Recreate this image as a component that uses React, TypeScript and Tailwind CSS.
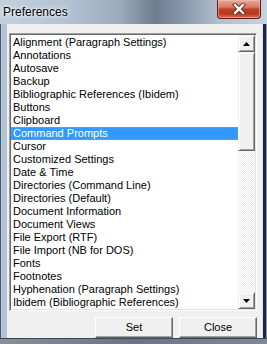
import React from "react";

const items = [
  "Alignment (Paragraph Settings)",
  "Annotations",
  "Autosave",
  "Backup",
  "Bibliographic References (Ibidem)",
  "Buttons",
  "Clipboard",
  "Command Prompts",
  "Cursor",
  "Customized Settings",
  "Date & Time",
  "Directories (Command Line)",
  "Directories (Default)",
  "Document Information",
  "Document Views",
  "File Export (RTF)",
  "File Import (NB for DOS)",
  "Fonts",
  "Footnotes",
  "Hyphenation (Paragraph Settings)",
  "Ibidem (Bibliographic References)",
];

const raised =
  "border border-t-[#f0f0f0] border-l-[#f0f0f0] border-r-[#696969] border-b-[#696969] shadow-[inset_1px_1px_#ffffff,inset_-1px_-1px_#a0a0a0] bg-[#f0f0f0]";

export default function App() {
  return (
    <div className="w-[267px] h-[344px] flex flex-col overflow-hidden bg-[linear-gradient(90deg,#b3c3d6_0%,#aebfd2_40%,#8e9db0_60%,#a9b9cb_80%,#b8c7d8_100%)] font-['Liberation_Sans',Arial,sans-serif]">
      {/* Title bar */}
      <div className="h-[24px] flex items-start shrink-0 bg-[linear-gradient(90deg,#c2d0de_0%,#b4c3d4_25%,#9aa9bc_45%,#6f7d91_58%,#8696aa_68%,#b0bfcf_82%,#c6d2df_100%)]">
        <div className="pl-[3px] pt-[4px] text-[12px] leading-[16px] text-black [text-shadow:0_0_5px_#ffffff,0_0_3px_#ffffff]">
          Preferences
        </div>
        <div className="ml-auto mr-[6px] w-[44px] h-[19px] rounded-b-[4px] border border-t-0 border-[#5a1e14] bg-[linear-gradient(180deg,#e8a797_0%,#d57a66_40%,#c0412a_50%,#b9371f_75%,#db6a4c_100%)] shadow-[inset_0_0_0_1px_rgba(255,200,190,0.5)] flex items-center justify-center">
          <svg width="14" height="12" viewBox="0 0 14 12">
            <path d="M3 2 L11 10 M11 2 L3 10" stroke="#5a2a22" strokeWidth="4.2" strokeLinecap="square" />
            <path d="M3 2 L11 10 M11 2 L3 10" stroke="#ffffff" strokeWidth="2.4" strokeLinecap="square" />
          </svg>
        </div>
      </div>

      {/* Body */}
      <div className="flex flex-1 min-h-0">
        <div className="w-[7px] shrink-0 border-l border-[#4e5b6c]" />
        <div className="flex-1 bg-[#f0f0f0] flex flex-col pl-[2px] pr-[5px] pt-[9px] text-[11px] leading-[13px] text-black">
          {/* Listbox */}
          <div className="h-[278px] flex border border-t-[#a0a0a0] border-l-[#a0a0a0] border-r-white border-b-white shadow-[inset_1px_1px_#696969,inset_-1px_-1px_#e3e3e3] p-[1px] bg-white">
            <div className="flex-1 flex flex-col pt-px">
              {items.map((it) => {
                const sel = it === "Command Prompts";
                return (
                  <div
                    key={it}
                    className={
                      sel
                        ? "h-[13px] pl-[1px] bg-[#3399ff] text-white border border-dotted border-[#e08a40] leading-[11px] whitespace-nowrap"
                        : "h-[13px] pl-[2px] whitespace-nowrap"
                    }
                  >
                    {it}
                  </div>
                );
              })}
            </div>
            <div className="w-[17px] flex flex-col">
              <div className={`h-[17px] flex items-center justify-center ${raised}`}>
                <svg width="7" height="4" viewBox="0 0 7 4">
                  <path d="M3.5 0 L7 4 L0 4 Z" fill="#000" />
                </svg>
              </div>
              <div className={`h-[99px] ${raised}`} />
              <div className="flex-1 bg-[repeating-conic-gradient(#ffffff_0%_25%,#ececec_0%_50%)] bg-[length:2px_2px]" />
              <div className={`h-[17px] flex items-center justify-center ${raised}`}>
                <svg width="7" height="4" viewBox="0 0 7 4">
                  <path d="M0 0 L7 0 L3.5 4 Z" fill="#000" />
                </svg>
              </div>
            </div>
          </div>
          {/* Buttons */}
          <div className="flex justify-end gap-[6px] mt-[6px]">
            <div className="w-[78px] h-[21px] flex items-center justify-center border border-t-white border-l-white border-r-[#696969] border-b-[#696969] shadow-[inset_-1px_-1px_#a0a0a0] bg-[#f0f0f0]">
              Set
            </div>
            <div className="w-[78px] h-[21px] flex items-center justify-center border border-t-white border-l-white border-r-[#696969] border-b-[#696969] shadow-[inset_-1px_-1px_#a0a0a0] bg-[#f0f0f0]">
              Close
            </div>
          </div>
        </div>
        <div className="w-[5px] shrink-0 flex">
          <div className="w-[1px] bg-[#dfe4ea]" />
          <div className="w-[3px] bg-[#1b2845]" />
          <div className="w-[1px] bg-[#8d98a6]" />
        </div>
      </div>
      <div className="h-[6px] shrink-0 border-t border-[#3b4658] bg-[linear-gradient(90deg,#8a8f99,#6c7585_50%,#7f8896)]" />
    </div>
  );
}
